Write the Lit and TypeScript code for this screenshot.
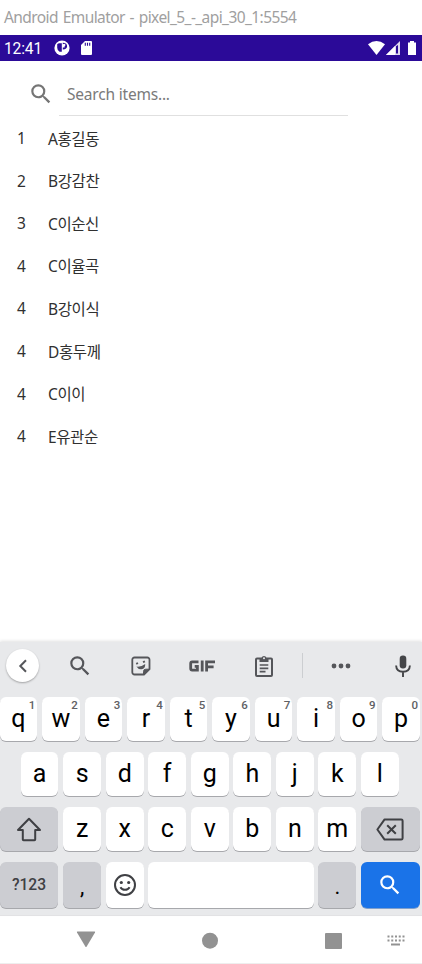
import { LitElement, html, svg, css } from "lit";
import { customElement } from "lit/decorators.js";

const SEARCH = svg`<path d="M15.5 14h-.79l-.28-.27A6.47 6.47 0 0 0 16 9.5 6.5 6.5 0 1 0 9.5 16c1.61 0 3.09-.59 4.23-1.57l.27.28v.79l5 4.99L20.49 19l-4.99-5zm-6 0a4.5 4.5 0 1 1 0-9 4.5 4.5 0 0 1 0 9z"/>`;

const icon = (name: string, size: number, body: unknown) =>
  html`<svg class=${name} width=${size} height=${size} viewBox="0 0 24 24" fill="currentColor">${body}</svg>`;

const PEOPLE: [number, string][] = [
  [1, "A홍길동"],
  [2, "B강감찬"],
  [3, "C이순신"],
  [4, "C이율곡"],
  [4, "B강이식"],
  [4, "D홍두께"],
  [4, "C이이"],
  [4, "E유관순"],
];

@customElement("status-bar")
class StatusBar extends LitElement {
  static styles = css`
    :host { display: flex; align-items: center; height: 26px; box-sizing: border-box; padding: 0 6px 0 4px; background: #2b0a98; color: #fff; font: 15.6px/26px Roboto, sans-serif; }
    .time { width: 50px; padding-top: 1px; letter-spacing: -0.15px; }
    .gap { flex: 1; }
    svg { display: block; flex: none; }
    .sd { margin-left: 11px; }
    .signal { margin-left: 1px; }
    .battery { margin-left: 8px; }
  `;
  render() {
    return html`<span class="time">12:41</span>
      <svg width="16" height="16" viewBox="0 0 16 16"><circle cx="8" cy="8" r="7.6" fill="#fff"/><path d="M3.2 4.2q1-1 2-1h2.6v8.6H5.6q-2.4-1.4-2.4-4zM8.8 2.8q4.3.3 4.3 3.4T8.8 9.5V7.4h1.8V4.3H8.8z" fill="#2b0a98"/><circle cx="10.2" cy="5" r="1.2" fill="#fff"/></svg>
      <svg class="sd" width="11" height="14" viewBox="0 0 11 14"><path d="M4 0h6q1 0 1 1v12q0 1-1 1H1q-1 0-1-1V4z" fill="#fff"/><path d="M4.3 1.8v3M6.5 1.8v3M8.7 1.8v3" stroke="#2b0a98" stroke-width="1.1"/></svg>
      <span class="gap"></span>
      <svg width="17" height="14" viewBox="0 0 17 14"><path d="M0 3.3Q8.5-3.2 17 3.3L8.5 14z" fill="#fff"/></svg>
      <svg class="signal" width="14" height="14" viewBox="0 0 14 14"><path d="M0 14 14 0v14z" fill="#fff" fill-opacity=".85"/><path d="M0 14 9 5v9z" fill="#fff"/><path d="M10 5.2 12 4v8.5h-2z" fill="#2b0a98"/></svg>
      <svg class="battery" width="8" height="14" viewBox="0 0 8 14"><path d="M2 0h4v1.4h2V14H0V1.4h2z" fill="#fff"/></svg>`;
  }
}

@customElement("people-list")
class PeopleList extends LitElement {
  static styles = css`
    :host { display: block; }
    .row { display: flex; align-items: center; height: 42.6px; color: #303030; font: 15.5px "Noto Sans", "Noto Sans CJK KR", sans-serif; }
    .num { width: 31px; padding-left: 17px; }
    .name { letter-spacing: -0.4px; }
  `;
  render() {
    return PEOPLE.map(([n, name]) => html`<div class="row"><span class="num">${n}</span><span class="name">${name}</span></div>`);
  }
}

@customElement("soft-keyboard")
class SoftKeyboard extends LitElement {
  static styles = css`
    :host { display: block; height: 273px; background: #e8e9eb; box-shadow: 0 -1px 3px rgba(0, 0, 0, 0.12); color: #55565a; font-family: Roboto, sans-serif; }
    svg { display: block; flex: none; }
    .tools { display: grid; grid-template-columns: 45px 69px 54px 68px 56px 20px 58px 52px; align-items: center; height: 47px; }
    .tools > * { justify-self: center; }
    .back { width: 33px; height: 33px; border-radius: 50%; background: #fff; box-shadow: 0 1px 2px rgba(0, 0, 0, 0.3); display: grid; place-items: center; }
    .divider { width: 1px; height: 25px; background: #ccced1; }
    .tools > .mic { color: #444548; justify-self: end; margin-right: 11.5px; }
    .keys { display: grid; grid-template-rows: 44.5px 44.5px 44.5px 46px; row-gap: 10.6px; margin: 7.6px 2px 0 -0.5px; }
    .line { display: grid; grid-template-columns: repeat(20, minmax(0, 1fr)); margin-right: -4.8px; }
    .key { position: relative; grid-column: span 2; display: grid; place-items: center; margin-right: 4.8px; border-radius: 6px; background: #fff; box-shadow: 0 1px 0.5px #a7a8ac; color: #000; font-size: 25px; line-height: 44px; }
    .key.first { grid-column: 2 / span 2; }
    .key.wide { grid-column: span 3; }
    .key.space { grid-column: span 8; }
    .key.grey { background: #cccdd2; color: #3f4044; }
    .key.mode { font-size: 15.6px; font-weight: 500; }
    .key.mark { color: #000; padding-top: 4px; font-size: 22px; line-height: 42px; }
    .key.go { background: #1a73e8; color: #fff; box-shadow: 0 1px 0.5px #7f9fcc; }
    .hint { position: absolute; top: 2px; right: 2px; font-size: 11.5px; line-height: 13px; font-weight: 500; color: #606165; }
  `;
  private key(ch: string, hint = "", extra = "") {
    return html`<div class="key ${extra}">${ch}${hint ? html`<span class="hint">${hint}</span>` : ""}</div>`;
  }
  render() {
    return html`
      <div class="tools">
        <div class="back"><svg width="10" height="14" viewBox="0 0 10 14" fill="none" stroke="currentColor" stroke-width="2"><path d="M8 1.3 2.3 7 8 12.7"/></svg></div>
        ${icon("search", 26, SEARCH)}
        <svg width="20" height="20" viewBox="0 0 20 20" fill="none" stroke="currentColor" stroke-width="1.8"><path d="M13 18.5H3.5a2.2 2.2 0 0 1-2.2-2.2V3.7a2.2 2.2 0 0 1 2.2-2.2h12.8a2.2 2.2 0 0 1 2.2 2.2v9.5z"/><path d="M12.5 18.5v-3a2.3 2.3 0 0 1 2.3-2.3h3.7L13 18.5z" fill="currentColor" stroke-width="1"/><path d="M5.2 7.8 7 7M12 6.1l1.9-.8" stroke-width="1.9"/><path d="M5.4 10.6q4.6.7 8.8-2.6.3 4.7-3.8 5.3-3.2.3-5-2.7z" fill="currentColor" stroke="none"/></svg>
        <svg width="26" height="12" viewBox="0 0 26 12" fill="none" stroke="currentColor" stroke-width="2.8"><path d="M9.5 1.9H3.2q-1.5 0-1.5 1.5v5.2q0 1.5 1.5 1.5h5.2V6.3H5.7M13.2.5v11M17.6 11.5V1.9H26M17.6 6.8h7"/></svg>
        <svg width="18" height="22" viewBox="0 0 18 22"><path d="M2 3.5h14q1 0 1 1V20q0 1-1 1H2q-1 0-1-1V4.5q0-1 1-1z" fill="none" stroke="currentColor" stroke-width="2"/><path d="M4.5 3H6.5a2.6 2.6 0 0 1 5 0h2v4h-9z" fill="currentColor"/><circle cx="9" cy="3.2" r="1" fill="#e8e9eb"/><path d="M4.7 10h8.6M4.7 13.3h8.6M4.7 16.6h5.8" stroke="currentColor" stroke-width="1.7"/></svg>
        <span class="divider"></span>
        <svg width="20" height="6" viewBox="0 0 20 6" fill="currentColor"><circle cx="3" cy="3" r="2.4"/><circle cx="10" cy="3" r="2.4"/><circle cx="17" cy="3" r="2.4"/></svg>
        <svg class="mic" width="16" height="22" viewBox="0 0 16 22"><rect x="4.7" y=".5" width="6.6" height="13" rx="3.2" fill="currentColor"/><path d="M1.1 10.5q.3 6.3 6.9 6.3t6.9-6.3M8 16.5V22" fill="none" stroke="currentColor" stroke-width="1.9"/></svg>
      </div>
      <div class="keys">
        <div class="line">${[..."qwertyuiop"].map((c, i) => this.key(c, String((i + 1) % 10)))}</div>
        <div class="line">${[..."asdfghjkl"].map((c, i) => this.key(c, "", i === 0 ? "first" : ""))}</div>
        <div class="line">
          <div class="key wide grey"><svg width="26" height="25" viewBox="0 0 26 25" fill="none" stroke="currentColor" stroke-width="2" stroke-linejoin="round"><path d="M13 1.7 24 13h-4.8v9.5q0 .8-.8.8H7.6q-.8 0-.8-.8V13H2z"/></svg></div>
          ${[..."zxcvbnm"].map((c) => this.key(c))}
          <div class="key wide grey"><svg width="28" height="23" viewBox="0 0 28 23" fill="none" stroke="currentColor" stroke-width="2" stroke-linejoin="round"><path d="M8.6 1.4h16.6q1.4 0 1.4 1.4v17.4q0 1.4-1.4 1.4H8.6L1.4 11.5z"/><path d="m11.2 7.2 8.6 8.6m0-8.6-8.6 8.6"/></svg></div>
        </div>
        <div class="line">
          <div class="key wide grey mode">?123</div>
          ${this.key(",", "", "grey mark")}
          <div class="key"><svg width="24" height="24" viewBox="0 0 24 24" fill="none" stroke="#3f4044" stroke-width="2"><circle cx="12" cy="12" r="10"/><circle cx="8.3" cy="9.5" r="1.6" fill="#3f4044" stroke="none"/><circle cx="15.7" cy="9.5" r="1.6" fill="#3f4044" stroke="none"/><path d="M7.4 14.2q1.5 2.6 4.6 2.6t4.6-2.6"/></svg></div>
          <div class="key space"></div>
          ${this.key(".", "", "grey mark")}
          <div class="key wide go">${icon("search", 26, SEARCH)}</div>
        </div>
      </div>`;
  }
}

@customElement("app-root")
class AppRoot extends LitElement {
  static styles = css`
    :host { display: flex; flex-direction: column; width: 422px; height: 964px; overflow: hidden; background: #fff; }
    .title { height: 35px; flex: none; padding-left: 4px; font: 15.5px/34px "Noto Sans", sans-serif; letter-spacing: -0.58px; word-spacing: 1.3px; color: #a0a0a0; white-space: nowrap; }
    .search { display: flex; height: 55px; flex: none; padding-left: 28px; color: #757575; }
    .search svg { margin: 20px 5px 0 0; }
    .field { width: 281px; padding-left: 8px; border-bottom: 1px solid #e0e0e0; font: 15.5px/66px "Noto Sans", sans-serif; letter-spacing: -0.2px; color: #7a7a7a; height: 54px; }
    people-list { flex: 1; padding-top: 0.8px; min-height: 0; }
    soft-keyboard { flex: none; }
    .nav { flex: none; height: 49px; box-sizing: border-box; border-top: 1px solid #e2e2e4; border-bottom: 1px solid #eee; }
    .nav svg { display: block; }
  `;
  render() {
    return html`
      <div class="title">Android Emulator - pixel_5_-_api_30_1:5554</div>
      <status-bar></status-bar>
      <div class="search">${icon("lens", 26, SEARCH)}<div class="field">Search items...</div></div>
      <people-list></people-list>
      <soft-keyboard></soft-keyboard>
      <div class="nav">
        <svg width="422" height="47" viewBox="0 0 422 47" fill="#929292">
          <path d="M77.5 15.5h17q1 0 .5 1l-8.3 14q-.7 1-1.4 0L77 16.5q-.5-1 .5-1z"/>
          <circle cx="210" cy="24.7" r="8"/>
          <rect x="325" y="17" width="17" height="16" rx="1"/>
          <path d="M387.5 20.5h17M387.5 24.5h17" stroke="#929292" stroke-width="2" stroke-dasharray="2 1.75"/>
          <path d="M391 27.5h9v2h-9z"/>
        </svg>
      </div>`;
  }
}
